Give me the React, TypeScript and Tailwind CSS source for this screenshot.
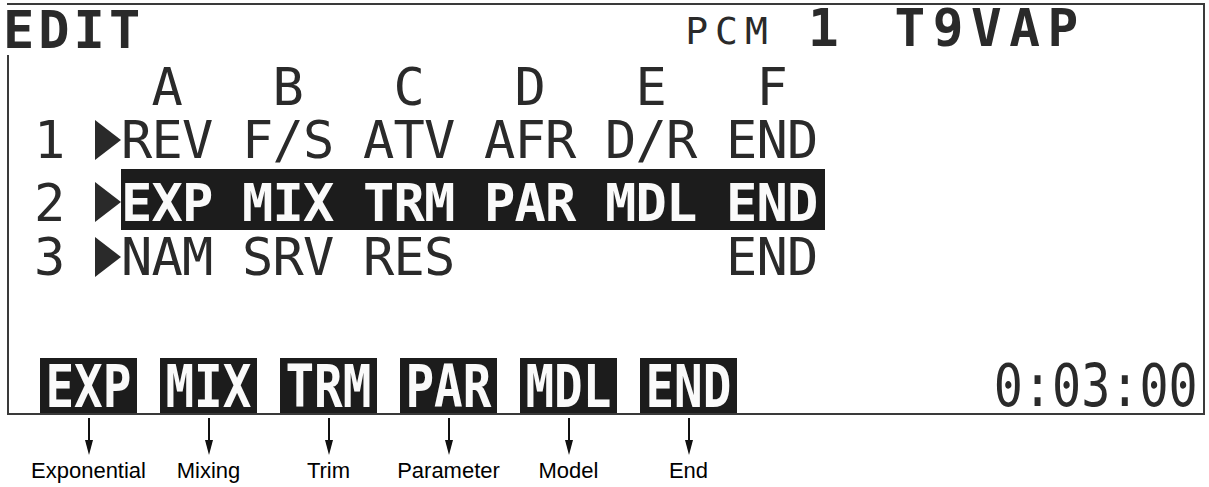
import React from "react";

// LCD menu screen of the transmitter's EDIT page, with softkey legend below.

const LCD = "font-['DejaVu_Sans_Mono',monospace]";

const rows = [
  { n: "1", items: ["REV", "F/S", "ATV", "AFR", "D/R", "END"] },
  { n: "2", items: ["EXP", "MIX", "TRM", "PAR", "MDL", "END"], active: true },
  { n: "3", items: ["NAM", "SRV", "RES", "", "", "END"] },
];

const softkeys = [
  { key: "EXP", label: "Exponential" },
  { key: "MIX", label: "Mixing" },
  { key: "TRM", label: "Trim" },
  { key: "PAR", label: "Parameter" },
  { key: "MDL", label: "Model" },
  { key: "END", label: "End" },
];

const Pointer = ({ className = "" }: { className?: string }) => (
  <svg width="26" height="40" viewBox="0 0 26 40" className={`shrink-0 ${className}`}>
    <polygon points="0,0 26,20 0,40" fill="#2a2a2a" />
  </svg>
);

const DownArrow = () => (
  <svg width="10" height="38" viewBox="0 0 10 38">
    <line x1="5" y1="0" x2="5" y2="24" stroke="#111" strokeWidth="2" />
    <polygon points="1,22 9,22 5,37" fill="#111" />
  </svg>
);

const Cells = ({ items, bold }: { items: string[]; bold?: boolean }) => (
  <div className="flex">
    {items.map((t, i) => (
      <div
        key={i}
        className={`whitespace-pre shrink-0 text-[52px] leading-[48px] tracking-[-0.8px] ${
          i < items.length - 1 ? "w-[121px]" : "pr-[7px]"
        } ${bold ? "font-bold" : ""}`}
      >
        {t}
      </div>
    ))}
  </div>
);

export default function App() {
  return (
    <div className={`w-[1209px] h-[487px] bg-white overflow-hidden ${LCD} text-[#2a2a2a]`}>
      {/* LCD panel */}
      <div className="ml-[7px] mt-[3px] w-[1198px] h-[412px] border-2 border-[#3a3a3a] flex flex-col">
        {/* title row */}
        <div className="flex items-start h-[56px]">
          <span className="relative bg-white ml-[-6px] font-bold text-[52px] leading-[50px] tracking-[4px]">EDIT</span>
          <span className="ml-[541px] mt-[9px] text-[38px] leading-[34px] tracking-[7px]">PCM</span>
          <span className="ml-[33px] font-bold text-[51px] leading-[48px] tracking-[7px]">1</span>
          <span className="ml-[49px] font-bold text-[51px] leading-[48px] tracking-[7.5px]">T9VAP</span>
        </div>

        {/* column letters */}
        <div className="flex h-[53px] pt-[2px]">
          <div className="w-[112px] shrink-0" />
          <Cells items={[" A ", " B ", " C ", " D ", " E ", " F "]} />
        </div>

        {/* menu rows */}
        {rows.map((r) => (
          <div key={r.n} className={`flex items-start ${r.active ? "h-[62px]" : "h-[55px] pt-[2px]"}`}>
            <div className={`ml-[25px] w-[31px] shrink-0 text-[52px] leading-[48px] ${r.active ? "mt-[10px]" : ""}`}>
              {r.n}
            </div>
            <Pointer className={`ml-[30px] ${r.active ? "mt-[13px]" : "mt-[4px]"}`} />
            {r.active ? (
              <div className="bg-[#1c1c1c] text-[#fafafa] h-[61px] pt-[10px]">
                <Cells items={r.items} bold />
              </div>
            ) : (
              <Cells items={r.items} />
            )}
          </div>
        ))}

        {/* softkeys + timer */}
        <div className="mt-auto flex items-end pl-[31px] pr-[5px]">
          <div className="flex gap-[23px]">
            {softkeys.map((s) => (
              <div
                key={s.key}
                className="w-[97px] h-[55px] bg-[#1c1c1c] text-[#fafafa] flex justify-center items-end"
              >
                <div className="font-bold text-[58px] leading-[52px] scale-x-[0.82] shrink-0">{s.key}</div>
              </div>
            ))}
          </div>
          <div className="ml-auto mb-[-1px] text-[59px] leading-[56px] scale-x-[0.82] origin-right">0:03:00</div>
        </div>
      </div>

      {/* legend */}
      <div className="ml-[40px] flex gap-[23px]">
        {softkeys.map((s) => (
          <div key={s.key} className="w-[97px] flex flex-col items-center">
            <div className="mt-[3px]">
              <DownArrow />
            </div>
            <div className="mt-[3px] font-['Liberation_Sans',Arial,sans-serif] text-[22px] leading-[24px] text-black whitespace-nowrap">
              {s.label}
            </div>
          </div>
        ))}
      </div>
    </div>
  );
}
